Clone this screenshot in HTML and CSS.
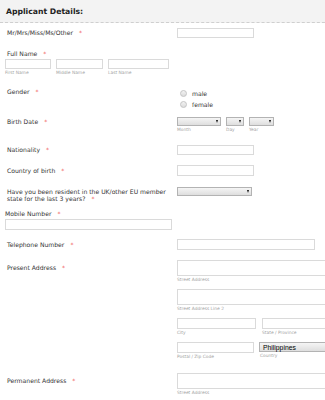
FILE: index.html
```html
<!DOCTYPE html>
<html lang="en">
<head>
  <meta charset="UTF-8">
  <meta name="viewport" content="width=device-width, initial-scale=1.0">
  <title>Applicant Details</title>
  <link rel="stylesheet" href="styles.css">
</head>
<body>
  <div class="form-all">
    <div class="section-header">Applicant Details:</div>

    <ul class="form-list">
      <li class="form-line line-title">
        <label class="form-label">Mr/Mrs/Miss/Ms/Other<span class="req">*</span></label>
        <div class="form-input"><input class="text w-md" type="text"></div>
      </li>

      <li class="form-line line-name top">
        <label class="form-label">Full Name<span class="req">*</span></label>
        <div class="name-fields">
          <span class="sub-field"><input class="text w-first" type="text"><small>First Name</small></span>
          <span class="sub-field"><input class="text w-middle" type="text"><small>Middle Name</small></span>
          <span class="sub-field"><input class="text w-last" type="text"><small>Last Name</small></span>
        </div>
      </li>

      <li class="form-line line-gender">
        <label class="form-label">Gender<span class="req">*</span></label>
        <div class="form-input">
          <label class="radio"><span class="radio-dot"></span>male</label>
          <label class="radio"><span class="radio-dot"></span>female</label>
        </div>
      </li>

      <li class="form-line line-birth">
        <label class="form-label">Birth Date<span class="req">*</span></label>
        <div class="form-input date-fields">
          <span class="sub-field"><span class="select w-month"></span><small>Month</small></span>
          <span class="sub-field"><span class="select w-day"></span><small>Day</small></span>
          <span class="sub-field"><span class="select w-year"></span><small>Year</small></span>
        </div>
      </li>

      <li class="form-line line-nation">
        <label class="form-label">Nationality<span class="req">*</span></label>
        <div class="form-input"><input class="text w-md" type="text"></div>
      </li>

      <li class="form-line line-country">
        <label class="form-label">Country of birth<span class="req">*</span></label>
        <div class="form-input"><input class="text w-md tall" type="text"></div>
      </li>

      <li class="form-line line-resident">
        <label class="form-label two-lines">Have you been resident in the UK/other EU member state for the last 3 years?<span class="req">*</span></label>
        <div class="form-input"><span class="select w-resident"></span></div>
      </li>

      <li class="form-line line-mobile top">
        <label class="form-label">Mobile Number<span class="req">*</span></label>
        <input class="text w-mobile tall" type="text">
      </li>

      <li class="form-line line-phone">
        <label class="form-label">Telephone Number<span class="req">*</span></label>
        <div class="form-input"><input class="text w-phone tall" type="text"></div>
      </li>

      <li class="form-line line-address">
        <label class="form-label">Present Address<span class="req">*</span></label>
        <div class="form-input address">
          <span class="sub-field"><input class="text w-street big" type="text"><small>Street Address</small></span>
          <span class="sub-field"><input class="text w-street big" type="text"><small>Street Address Line 2</small></span>
          <div class="addr-pair">
            <span class="sub-field"><input class="text w-city tall" type="text"><small>City</small></span>
            <span class="sub-field"><input class="text w-state tall" type="text"><small>State / Province</small></span>
          </div>
          <div class="addr-pair">
            <span class="sub-field"><input class="text w-zip tall" type="text"><small>Postal / Zip Code</small></span>
            <span class="sub-field"><span class="select w-country">Philippines</span><small>Country</small></span>
          </div>
        </div>
      </li>

      <li class="form-line line-address">
        <label class="form-label">Permanent Address<span class="req">*</span></label>
        <div class="form-input address">
          <span class="sub-field"><input class="text w-street big" type="text"><small>Street Address</small></span>
          <span class="sub-field"><input class="text w-street big" type="text"><small>Street Address Line 2</small></span>
        </div>
      </li>
    </ul>
  </div>
</body>
</html>
```

FILE: styles.css
```css
body{
  margin: 0;
  background: #fff;
  font-family: "DejaVu Sans", Verdana, sans-serif;
  color: #333;
  overflow: hidden;
}

.form-all{
  width: 340px;
}

.section-header{
  height: 22px;
  line-height: 24px;
  padding-left: 6px;
  background: #f3f3f3;
  border-bottom: 1px dashed #cfcfcf;
  font-size: 7.7px;
  font-weight: bold;
  color: #222;
}

.form-list{
  list-style: none;
  margin: 0;
  padding: 5px 0 0;
}

.form-line{
  display: flex;
  align-items: flex-start;
}
.form-line.top{
  flex-direction: column;
}

.form-label{
  width: 177px;
  flex-shrink: 0;
  padding-left: 7px;
  box-sizing: border-box;
  font-size: 6.1px;
  line-height: 10px;
}
.req{
  margin-left: 6px;
  color: #f26b6b;
}

.form-input{
  display: flex;
  flex-direction: column;
}

/* text boxes */
.text{
  box-sizing: border-box;
  height: 10px;
  margin: 0;
  padding: 0;
  border: 1px solid #dadada;
  background: #fff;
  outline: none;
}
.text.tall{ height: 11px; }
.text.big{ height: 16px; }

.w-md{ width: 77px; }
.w-first{ width: 46px; }
.w-middle{ width: 47px; }
.w-last{ width: 61px; }
.w-mobile{ width: 167px; }
.w-phone{ width: 138px; }
.w-street{ width: 160px; }
.w-city{ width: 79px; }
.w-state{ width: 78px; }
.w-zip{ width: 77px; }

/* fake selects */
.select{
  position: relative;
  display: block;
  box-sizing: border-box;
  height: 9px;
  border: 1px solid #b3b3b3;
  background: linear-gradient(#f5f5f5, #dedede);
}
.select::after{
  content: "";
  position: absolute;
  right: 2px;
  top: 2px;
  border-left: 1.5px solid transparent;
  border-right: 1.5px solid transparent;
  border-top: 3px solid #111;
}
.w-month{ width: 44px; }
.w-day{ width: 18px; }
.w-year{ width: 25px; }
.w-resident{ width: 75px; }
.w-country{
  width: 80px;
  height: 10px;
  padding-left: 3px;
  font-family: "Liberation Sans", Arial, sans-serif;
  font-size: 6.8px;
  line-height: 9px;
  color: #000;
}

.sub-field{
  display: flex;
  flex-direction: column;
}
.sub-field small{
  font-size: 4.4px;
  line-height: 5px;
  color: #a3a3a3;
  margin-top: 1px;
}

/* rows */
.line-title{ height: 22px; }

.line-name{ height: 39px; }
.line-name .form-label{ line-height: 7px; margin-bottom: 2px; }
.name-fields{
  display: flex;
  gap: 5px;
  padding-left: 5px;
}

.line-gender{ height: 28px; }
.line-gender .form-label{ line-height: 8px; margin-top: -1px; }
.radio{
  display: flex;
  align-items: center;
  height: 11px;
  margin-top: -1px;
  margin-bottom: 1px;
  font-size: 6.1px;
}
.radio-dot{
  width: 5px;
  height: 5px;
  margin: 0 5px 0 3px;
  border: 1px solid #c4c4c4;
  border-radius: 50%;
  background: linear-gradient(#f2f2f2, #dcdcdc);
}

.line-birth{ height: 28px; }
.date-fields{
  flex-direction: row;
  gap: 5px;
}

.line-nation{ height: 20px; }
.line-country{ height: 22px; }
.line-country .form-label{ line-height: 11px; }

.line-resident{ height: 22px; }
.form-label.two-lines{
  line-height: 7.5px;
  padding-top: 0.5px;
  padding-right: 6px;
}

.line-mobile{ height: 30px; padding-left: 5px; }
.line-mobile .form-label{ padding-left: 0; line-height: 7px; margin: 1px 0 2px; }

.line-phone{ height: 21px; }
.line-phone .form-label{ line-height: 11px; }

.line-address{ height: 113px; }
.line-address .form-label{ line-height: 16px; }
.address .sub-field{
  margin-bottom: 7px;
}
.addr-pair{
  display: flex;
  gap: 4px;
}
.addr-pair .sub-field:last-child{
  margin-left: 2px;
}
.addr-pair .w-country{ margin-left: -1px; }
```
